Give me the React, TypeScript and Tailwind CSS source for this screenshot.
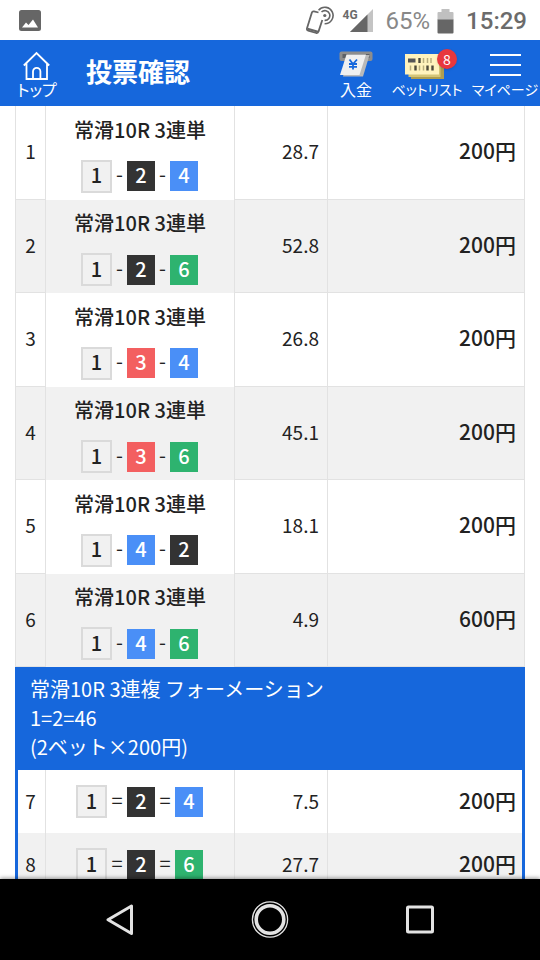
import clsx from "clsx"

type Bet = {
  no: number
  title?: string
  picks: number[]
  odds: string
  amount: string
}

const singleBets: Bet[] = [
  { no: 1, title: "常滑10R 3連単", picks: [1, 2, 4], odds: "28.7", amount: "200円" },
  { no: 2, title: "常滑10R 3連単", picks: [1, 2, 6], odds: "52.8", amount: "200円" },
  { no: 3, title: "常滑10R 3連単", picks: [1, 3, 4], odds: "26.8", amount: "200円" },
  { no: 4, title: "常滑10R 3連単", picks: [1, 3, 6], odds: "45.1", amount: "200円" },
  { no: 5, title: "常滑10R 3連単", picks: [1, 4, 2], odds: "18.1", amount: "200円" },
  { no: 6, title: "常滑10R 3連単", picks: [1, 4, 6], odds: "4.9", amount: "600円" },
]

const formationBets: Bet[] = [
  { no: 7, picks: [1, 2, 4], odds: "7.5", amount: "200円" },
  { no: 8, picks: [1, 2, 6], odds: "27.7", amount: "200円" },
]

const boatColors: Record<number, string> = {
  1: "h-[33px] w-[31px] border-2 border-[#dadada] bg-[#f1f1f1] text-[#222]",
  2: "h-[30px] w-7 bg-[#333] text-white",
  3: "h-[30px] w-7 bg-[#f35f60] text-white",
  4: "h-[30px] w-7 bg-[#4a8ff7] text-white",
  6: "h-[30px] w-7 bg-[#2eb36f] text-white",
}

function Picks({ picks, separator }: { picks: number[]; separator: "-" | "=" }) {
  return (
    <div className="flex items-center justify-center pr-px">
      {picks.map((boat, i) => (
        <div key={boat} className="flex items-center">
          {i > 0 && (
            <span className={clsx("pb-1 text-center leading-6", separator === "-" ? "w-[15px]" : "w-5")}>
              {separator}
            </span>
          )}
          <span className={clsx("flex items-center justify-center pb-0.5 font-medium leading-6", boatColors[boat])}>
            {boat}
          </span>
        </div>
      ))}
    </div>
  )
}

function SingleRow({ bet }: { bet: Bet }) {
  return (
    <tr className="odd:h-[94px] even:h-[93px] even:bg-[#f1f1f1]">
      <td className="border-x border-b border-[#e2e2e2] pb-1 text-center text-[19px]">{bet.no}</td>
      <td className="border-r border-[#e2e2e2] pt-2 pb-[7px]">
        <p className="mb-4 text-center font-medium leading-[29px]">{bet.title}</p>
        <Picks picks={bet.picks} separator="-" />
      </td>
      <td className="border-r border-b border-[#e2e2e2] pr-2 pb-1 text-right text-[19px]">{bet.odds}</td>
      <td className="border-r border-b border-[#e2e2e2] pr-2 pb-1 text-right text-[21px] font-medium">{bet.amount}</td>
    </tr>
  )
}

function FormationRow({ bet }: { bet: Bet }) {
  return (
    <tr className="h-[63px] even:bg-[#f1f1f1]">
      <td className="border-r border-l-3 border-r-[#e2e2e2] border-l-[#1667dc] pr-0.5 pb-0.5 text-center text-[19px]">{bet.no}</td>
      <td className="border-r border-[#e2e2e2]">
        <Picks picks={bet.picks} separator="=" />
      </td>
      <td className="border-r border-[#e2e2e2] pr-2 pb-0.5 text-right text-[19px]">{bet.odds}</td>
      <td className="border-r-3 border-[#1667dc] pr-1.5 pb-0.5 text-right text-[21px] font-medium">{bet.amount}</td>
    </tr>
  )
}

function StatusBar() {
  return (
    <div className="flex h-10 shrink-0 items-center bg-white pt-0.5 pr-[13px] pl-[19px] font-[Roboto,sans-serif] text-[#6b6b6b]">
      <svg className="size-[23px]" viewBox="0 0 23 23" aria-hidden="true">
        <rect x="0" y="0" width="22" height="21" rx="2.5" fill="#666" />
        <path d="M3 17.5 7 12.5l2.5 2.5 4.5-5.5 5 8z" fill="#fff" />
      </svg>
      <div className="ml-auto flex items-center">
        <svg className="h-[30px] w-[30px]" viewBox="0 0 30 30" fill="none" stroke="#666" aria-hidden="true">
          <path d="M12.5 6.5 8 5.4Q6.400 5 5.900 6.600L1 22.200Q.5 24.200 2.200 24.700L10.200 27Q12 27.400 12.500 25.600L16.300 14" strokeWidth="1.8" />
          <path d="M1.500 22.800 12 25.800" strokeWidth="2.2" />
          <circle cx="18.800" cy="9.500" r="1.600" fill="#666" stroke="none" />
          <path d="M15.500 6A4.900 4.900 0 1 1 18.600 14.400M12.600 4.200A8.200 8.200 0 1 1 18.600 17.700" strokeWidth="1.6" />
        </svg>
        <div className="relative ml-[7px] h-6 w-[31px]">
          <svg className="h-6 w-[31px]" viewBox="0 0 31 24" aria-hidden="true">
            <path d="M30 0v23h-23z" fill="#c4c4c4" />
            <path d="M24.5 5.5v17.5h-17.5z" fill="#666" />
          </svg>
          <span className="absolute -top-0.5 left-0 text-xs font-bold">4G</span>
        </div>
        <span className="ml-3 text-2xl text-[#888]">65%</span>
        <svg className="mr-3 ml-[7px] h-[25px] w-[17px]" viewBox="0 0 17 25" aria-hidden="true">
          <path d="M4.5 0h8v3h3q1 0 1 1v7H.5V4q0-1 1-1h3z" fill="#c0c0c0" />
          <path d="M.5 10.5h16V23.5q0 1-1 1h-14q-1 0-1-1z" fill="#666" />
        </svg>
        <span className="text-2xl font-medium">15:29</span>
      </div>
    </div>
  )
}

function Header() {
  const item = "flex flex-col items-center whitespace-nowrap pt-0.5 leading-4 [font-feature-settings:'palt']"

  return (
    <header className="flex h-[66px] shrink-0 items-center bg-[#1667dc] text-white">
      <button type="button" className={clsx(item, "ml-1 w-[66px] text-base")}>
        <svg className="h-[30px] w-7" viewBox="0 0 28 30" fill="none" stroke="#fff" strokeWidth="1.8" aria-hidden="true">
          <path d="M.8 14.5 13.5 2l12.7 12.5M3.5 12.5V28h20.5V12.5" />
          <path d="M10 28v-7.500a3.700 3.700 0 0 1 7.400 0V28" />
        </svg>
        トップ
      </button>
      <h1 className="ml-4 pb-1 text-[26px] font-bold leading-8">投票確認</h1>
      <nav className="ml-auto flex">
        <button type="button" className={clsx(item, "w-14 text-base")}>
          <svg className="h-[30px] w-[34px]" viewBox="0 0 34 30" aria-hidden="true">
            <rect x="0.5" y="0.5" width="33" height="9.5" rx="2" fill="#8d8d8d" />
            <rect x="3.5" y="3" width="27" height="4" fill="#5c6066" />
            <path d="M9 4h21.500L24 25.500H4z" fill="#b9b9b9" />
            <path d="M7.500 3.500h19.500L20.500 24H1z" fill="#f0f0f0" />
            <path d="m10.500 8.500 3.500 4.500L18 8.500M14 13v5.500M10 13h8M10 15.800h8" fill="none" stroke="#1667dc" strokeWidth="1.800" />
          </svg>
          入金
        </button>
        <button type="button" className={clsx(item, "w-[86px] text-sm leading-4")}>
          <span className="relative pr-1">
            <svg className="h-[30px] w-10" viewBox="0 0 40 30" aria-hidden="true">
              <path d="M6 8h33v20H6z" fill="#ae9e50" />
              <path d="M3.5 6h32v20h-32z" fill="#d4c577" />
              <path d="M0 3h34v20.500H0z" fill="#fff3bd" />
              <path d="M3 7.500h7.500v4H3z" fill="#555" />
              <path d="M14.500 7v5M10.500 14.500v5M22.500 14.500v5M27.500 14.500v5" stroke="#4e4a3a" strokeWidth="2.400" />
              <path d="M18.500 7v5M22.500 7v5M26 7v5M5.500 14.500v5M14.500 14.500v5M18.500 14.500v5" stroke="#b9ae7e" strokeWidth="1.500" />
            </svg>
            <span className="absolute -top-0.5 -right-2 flex size-5 items-center justify-center rounded-full bg-[#e8373d] text-sm leading-none shadow">
              8
            </span>
          </span>
          ベットリスト
        </button>
        <button type="button" className={clsx(item, "w-[70px] text-sm leading-4")}>
          <svg className="h-[30px] w-[31px]" viewBox="0 0 31 30" stroke="#fff" strokeWidth="2" aria-hidden="true">
            <path d="M0 4h31M0 14h31M0 24h31" />
          </svg>
          マイページ
        </button>
      </nav>
    </header>
  )
}

function SystemNav() {
  const item = "flex w-[150px] items-center justify-center"

  return (
    <nav className="z-10 flex h-[81px] shrink-0 justify-center bg-black shadow-[0_-1px_4px_rgba(0,0,0,0.4)]">
      <button type="button" aria-label="戻る" className={item}>
        <svg className="h-8 w-[30px]" viewBox="0 0 30 32" fill="none" stroke="#e3e3e3" strokeWidth="3" strokeLinejoin="round" aria-hidden="true">
          <path d="M26.5 2v27.500L3 15.700z" />
        </svg>
      </button>
      <button type="button" aria-label="ホーム" className={item}>
        <svg className="size-[38px]" viewBox="0 0 38 38" fill="none" stroke="#e3e3e3" aria-hidden="true">
          <circle cx="19" cy="18.5" r="17.6" strokeWidth="1.3" />
          <circle cx="19" cy="18.5" r="13.8" strokeWidth="3.6" />
        </svg>
      </button>
      <button type="button" aria-label="履歴" className={item}>
        <svg className="size-[30px]" viewBox="0 0 30 30" fill="none" stroke="#e3e3e3" strokeWidth="3" aria-hidden="true">
          <rect x="2.5" y="2" width="25" height="25" rx="1" />
        </svg>
      </button>
    </nav>
  )
}

export default function App() {
  return (
    <div className="flex h-screen flex-col bg-white font-['Noto_Sans_CJK_JP',sans-serif] text-[#222]">
      <StatusBar />
      <Header />
      <main className="min-h-0 flex-1 overflow-hidden px-[15px]">
        <table className="w-full table-fixed border-separate border-spacing-0 text-xl leading-[29px]">
          <colgroup>
            <col className="w-[31px]" />
            <col className="w-[189px]" />
            <col className="w-[93px]" />
            <col />
          </colgroup>
          <tbody>
            {singleBets.map((bet) => (
              <SingleRow key={bet.no} bet={bet} />
            ))}
          </tbody>
          <tbody>
            <tr>
              <th colSpan={4} scope="colgroup" className="bg-[#1667dc] px-[15px] pt-[7px] pb-[9px] text-left font-normal text-white">
                <p>常滑10R 3連複 フォーメーション</p>
                <p>1=2=46</p>
                <p>(2ベット×200円)</p>
              </th>
            </tr>
          </tbody>
          <tbody>
            {formationBets.map((bet) => (
              <FormationRow key={bet.no} bet={bet} />
            ))}
          </tbody>
        </table>
      </main>
      <SystemNav />
    </div>
  )
}
